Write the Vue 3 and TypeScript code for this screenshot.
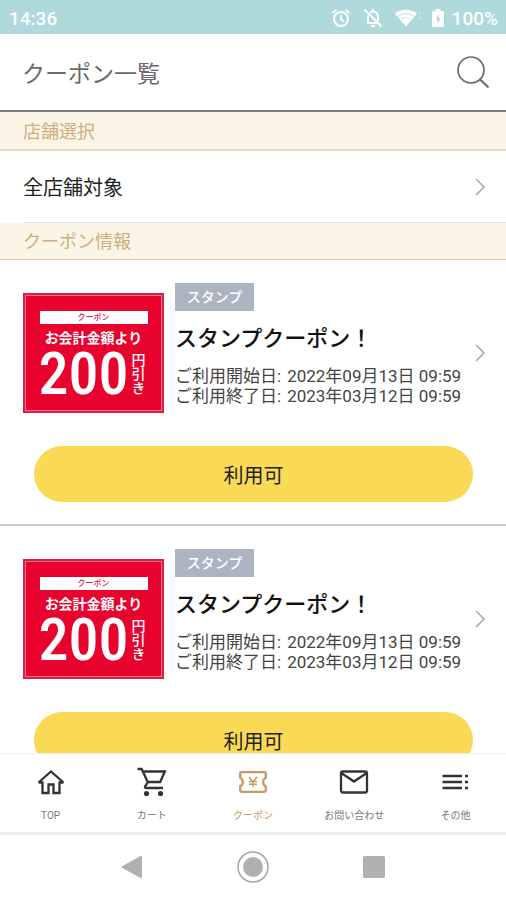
<script setup lang="ts">
interface Coupon {
  id: number
  tag: string
  title: string
  start: string
  end: string
}

type IconName = 'home' | 'cart' | 'coupon' | 'mail' | 'more'

interface Tab {
  icon: IconName
  label: string
  active?: boolean
}

const coupons: Coupon[] = [1, 2].map((id) => ({
  id,
  tag: 'スタンプ',
  title: 'スタンプクーポン！',
  start: '2022年09月13日 09:59',
  end: '2023年03月12日 09:59',
}))

const tabs: Tab[] = [
  { icon: 'home', label: 'TOP' },
  { icon: 'cart', label: 'カート' },
  { icon: 'coupon', label: 'クーポン', active: true },
  { icon: 'mail', label: 'お問い合わせ' },
  { icon: 'more', label: 'その他' },
]
</script>

<template>
  <div class="app">
    <div class="status">
      <span>14:36</span>
      <div class="status-icons">
        <svg width="20" height="20" viewBox="0 0 20 20" fill="none" stroke="#fff" stroke-width="2">
          <circle cx="10" cy="11" r="7" />
          <path d="M10 7v4.500l3 1.800M1.500 5l4-3.300M18.500 5l-4-3.300" stroke-width="1.700" />
        </svg>
        <svg class="bell" width="20" height="20" viewBox="0 0 20 20" fill="none" stroke="#fff" stroke-width="2">
          <path d="M7 4.500C11 2 15 5 15 9v4M5 7.500V15h9.500M1.500 1.500l17 17" />
          <path d="M10 1v2.500M8 18h4" />
        </svg>
        <svg class="wifi" width="28" height="20" viewBox="0 0 28 20" fill="#fff">
          <path d="M0 5.500C6 .500 16 .500 22 5.500L11 18.500z" />
          <path d="M3.500 8c4.500-3 10.500-3 15 0M6 11.200c3-2 7-2 10 0" fill="none" stroke="#aedadb" stroke-width=".8" />
          <path d="M24 4h2v2h-2zM24 9h2v2h-2z" opacity=".4" />
        </svg>
        <svg width="12" height="20" viewBox="0 0 12 20">
          <path d="M3.500 1h5v2H11a1 1 0 0 1 1 1v14a1 1 0 0 1-1 1H1a1 1 0 0 1-1-1V4a1 1 0 0 1 1-1h2.500z" fill="#fff" />
          <path d="M6.800 6L3.500 11.500h2V16l3.300-5.800H6.800z" fill="#aedadb" />
        </svg>
        <span class="battery">100%</span>
      </div>
    </div>

    <header class="header">
      <h1>クーポン一覧</h1>
      <button class="search" type="button" aria-label="検索">
        <svg width="34" height="34" viewBox="0 0 34 34" fill="none" stroke="#6b6969">
          <circle cx="15" cy="15" r="13" stroke-width="1.700" />
          <path d="M24 24.500l8.500 8" stroke-width="2.200" />
        </svg>
      </button>
    </header>

    <main class="content">
      <h2 class="section">店舗選択</h2>
      <a class="shop" href="#shops">
        <span>全店舗対象</span>
        <svg class="chevron" width="12" height="18" viewBox="0 0 12 18"><path d="M2 1l8 8-8 8" /></svg>
      </a>
      <h2 class="section info">クーポン情報</h2>

      <article v-for="coupon in coupons" :key="coupon.id" class="coupon">
        <a class="detail" href="#coupon">
          <div class="thumb">
            <span class="thumb-label">クーポン</span>
            <span class="thumb-lead">お会計金額より</span>
            <span class="thumb-value">
              <span class="amount">200</span>
              <span class="unit">円引き</span>
            </span>
          </div>
          <div class="summary">
            <span class="tag">{{ coupon.tag }}</span>
            <h3>{{ coupon.title }}</h3>
            <p><span>ご利用開始日:</span><time>{{ coupon.start }}</time></p>
            <p><span>ご利用終了日:</span><time>{{ coupon.end }}</time></p>
          </div>
          <svg class="chevron" width="12" height="18" viewBox="0 0 12 18"><path d="M2 1l8 8-8 8" /></svg>
        </a>
        <button class="use" type="button">利用可</button>
      </article>
    </main>

    <nav class="tabs">
      <a v-for="tab in tabs" :key="tab.label" href="#tab" :class="{ active: tab.active }">
        <svg width="32" height="32" viewBox="0 0 32 32" fill="none" stroke="currentColor" stroke-width="2.300">
          <path v-if="tab.icon === 'home'" d="M3.500 16.500L16 5.500l12.500 11M3.500 16.500h4V27h6V18.500h5V27h6V16.500h4" />
          <template v-else-if="tab.icon === 'cart'">
            <path d="M1.500 3h4.200l6 13h12.500l4.600-10.500H7.500M12 16l-3 4.500q-.5 1.500 1.500 1.500H27" />
            <circle cx="10.500" cy="27.500" r="2.600" fill="currentColor" stroke="none" />
            <circle cx="24.500" cy="27.500" r="2.600" fill="currentColor" stroke="none" />
          </template>
          <template v-else-if="tab.icon === 'coupon'">
            <path d="M4.500 6.200h23q1.300 0 1.300 1.300v4.200a4.800 4.800 0 0 0 0 8.600v4.200q0 1.300-1.300 1.300h-23q-1.300 0-1.300-1.300v-4.200a4.800 4.800 0 0 0 0-8.600V7.500q0-1.300 1.300-1.300z" />
            <path d="M12 11l4 5 4-5M16 15.500v5.500M12 15.500h8M12 18.200h8" stroke-width="1.500" />
          </template>
          <template v-else-if="tab.icon === 'mail'">
            <rect x="3" y="5.500" width="26" height="21" rx="2" />
            <path d="M4 7.500l12 8 12-8" />
          </template>
          <path v-else d="M3.500 10H23M3.500 16H23M3.500 22H23M26 10h3M26 16h3M26 22h3" />
        </svg>
        <span>{{ tab.label }}</span>
      </a>
    </nav>

    <div class="system">
      <button type="button" aria-label="戻る">
        <svg width="32" height="32" viewBox="0 0 32 32" fill="#b0b0b0"><path d="M6.500 15L24.500 5q1.500-.5 1.500 1v20q0 1.500-1.500 1L6.500 17q-1.500-1 0-2z" /></svg>
      </button>
      <button type="button" aria-label="ホーム">
        <svg width="32" height="32" viewBox="0 0 32 32"><circle cx="16" cy="16" r="15" fill="none" stroke="#a6a6a6" stroke-width="1.500" /><circle cx="16" cy="16" r="10" fill="#b0b0b0" /></svg>
      </button>
      <button type="button" aria-label="履歴">
        <svg width="32" height="32" viewBox="0 0 32 32"><rect x="5" y="5" width="22" height="22" rx="1.500" fill="#b0b0b0" /></svg>
      </button>
    </div>
  </div>
</template>

<style>
body {
  margin: 0;
  background: #fff;
}
</style>

<style scoped>
.app {
  display: flex;
  flex-direction: column;
  height: 100vh;
  font-family: Roboto, "Noto Sans CJK JP", sans-serif;
  color: #222;
  background: #fff;
}
.app * {
  box-sizing: border-box;
}
h1,
h2,
h3,
p {
  margin: 0;
  font-weight: 400;
}
a {
  color: inherit;
  text-decoration: none;
}
button {
  padding: 0;
  border: 0;
  background: none;
  font-family: inherit;
  color: inherit;
}
svg {
  display: block;
  flex: none;
}
.status {
  display: flex;
  flex: none;
  align-items: center;
  justify-content: space-between;
  height: 34px;
  padding: 2px 8px 0 9px;
  background: #aedadb;
  color: #fff;
  font-size: 19px;
  font-weight: 500;
}
.status-icons {
  display: flex;
  align-items: center;
}
.bell {
  margin-left: 12px;
}
.wifi {
  margin: 0 9px 0 12px;
}
.battery {
  margin-left: 8px;
}
.header {
  display: flex;
  flex: none;
  align-items: center;
  justify-content: space-between;
  height: 78px;
  padding: 0 16px 0 22px;
  border-bottom: 2px solid #7d7b7a;
}
h1 {
  font-size: 23px;
  color: #6b6969;
}
.content {
  flex: 1;
  min-height: 0;
  overflow: hidden;
}
.section {
  height: 39px;
  padding: 0 23px;
  border-bottom: 2px solid #e8dbc4;
  background: #faf5e6;
  color: #d0ad7e;
  font-size: 18px;
  line-height: 40px;
}
.info {
  height: 37px;
  border-bottom: 1px solid #d8c5a8;
  line-height: 38px;
}
.shop {
  display: flex;
  align-items: center;
  justify-content: space-between;
  height: 72px;
  margin-left: 23px;
  padding-right: 20px;
  border-bottom: 1px solid #e6e4dc;
  font-size: 20px;
}
.chevron {
  fill: none;
  stroke: #a8a8a8;
  stroke-width: 1.6;
}
.coupon {
  height: 266px;
  padding-top: 23px;
  border-bottom: 2px solid #cecece;
}
.detail {
  display: flex;
  align-items: center;
  height: 140px;
  padding: 0 20px 0 23px;
}
.thumb {
  display: flex;
  flex: none;
  flex-direction: column;
  align-items: center;
  width: 141px;
  height: 120px;
  padding-top: 16px;
  border: 2px solid #d92046;
  outline: 1px solid #f0718a;
  outline-offset: -3px;
  background: #e8032f;
  color: #fff;
  font-weight: 500;
}
.thumb-label {
  width: 108px;
  height: 13px;
  background: #fff;
  color: #d92046;
  font-size: 8px;
  line-height: 13px;
  text-align: center;
}
.thumb-lead {
  margin-top: 4px;
  font-size: 14px;
  font-weight: 700;
  line-height: 20px;
  white-space: nowrap;
}
.thumb-value {
  display: flex;
  align-items: center;
  gap: 2px;
  padding-right: 4px;
}
.amount {
  font-family: "Roboto Condensed", "Liberation Sans Narrow", Roboto, sans-serif;
  font-size: 60px;
  line-height: 52px;
}
.unit {
  font-size: 14px;
  line-height: 14px;
  writing-mode: vertical-rl;
}
.summary {
  flex: 1;
  min-width: 0;
  padding-left: 11px;
  align-self: flex-start;
}
.tag {
  display: block;
  width: 79px;
  height: 28px;
  background: #adb4c1;
  color: #fff;
  font-size: 14px;
  font-weight: 500;
  line-height: 28px;
  text-align: center;
}
h3 {
  margin: 13px 0 12px;
  font-size: 22px;
  font-weight: 500;
  line-height: 30px;
  color: #111;
  white-space: nowrap;
}
p {
  display: flex;
  gap: 6px;
  font-size: 17px;
  line-height: 20px;
  color: #444;
  white-space: nowrap;
}
.use {
  display: block;
  width: calc(100% - 67px);
  height: 56px;
  margin: 23px 33px 0 34px;
  border-radius: 28px;
  background: #fad955;
  font-size: 20px;
}
.tabs {
  display: grid;
  flex: none;
  grid-template-columns: repeat(5, 1fr);
  height: 82px;
  border-top: 1px solid #f0f0f0;
  border-bottom: 3px solid #efefef;
  color: #333;
}
.tabs a {
  display: flex;
  flex-direction: column;
  align-items: center;
  padding-top: 12px;
}
.tabs span {
  margin-top: 10px;
  font-size: 10px;
  line-height: 16px;
  color: #777;
}
.tabs .active,
.tabs .active span {
  color: #c79a5f;
}
.system {
  display: flex;
  flex: none;
  align-items: center;
  justify-content: center;
  gap: 89px;
  height: 65px;
  padding-bottom: 2px;
}
</style>
